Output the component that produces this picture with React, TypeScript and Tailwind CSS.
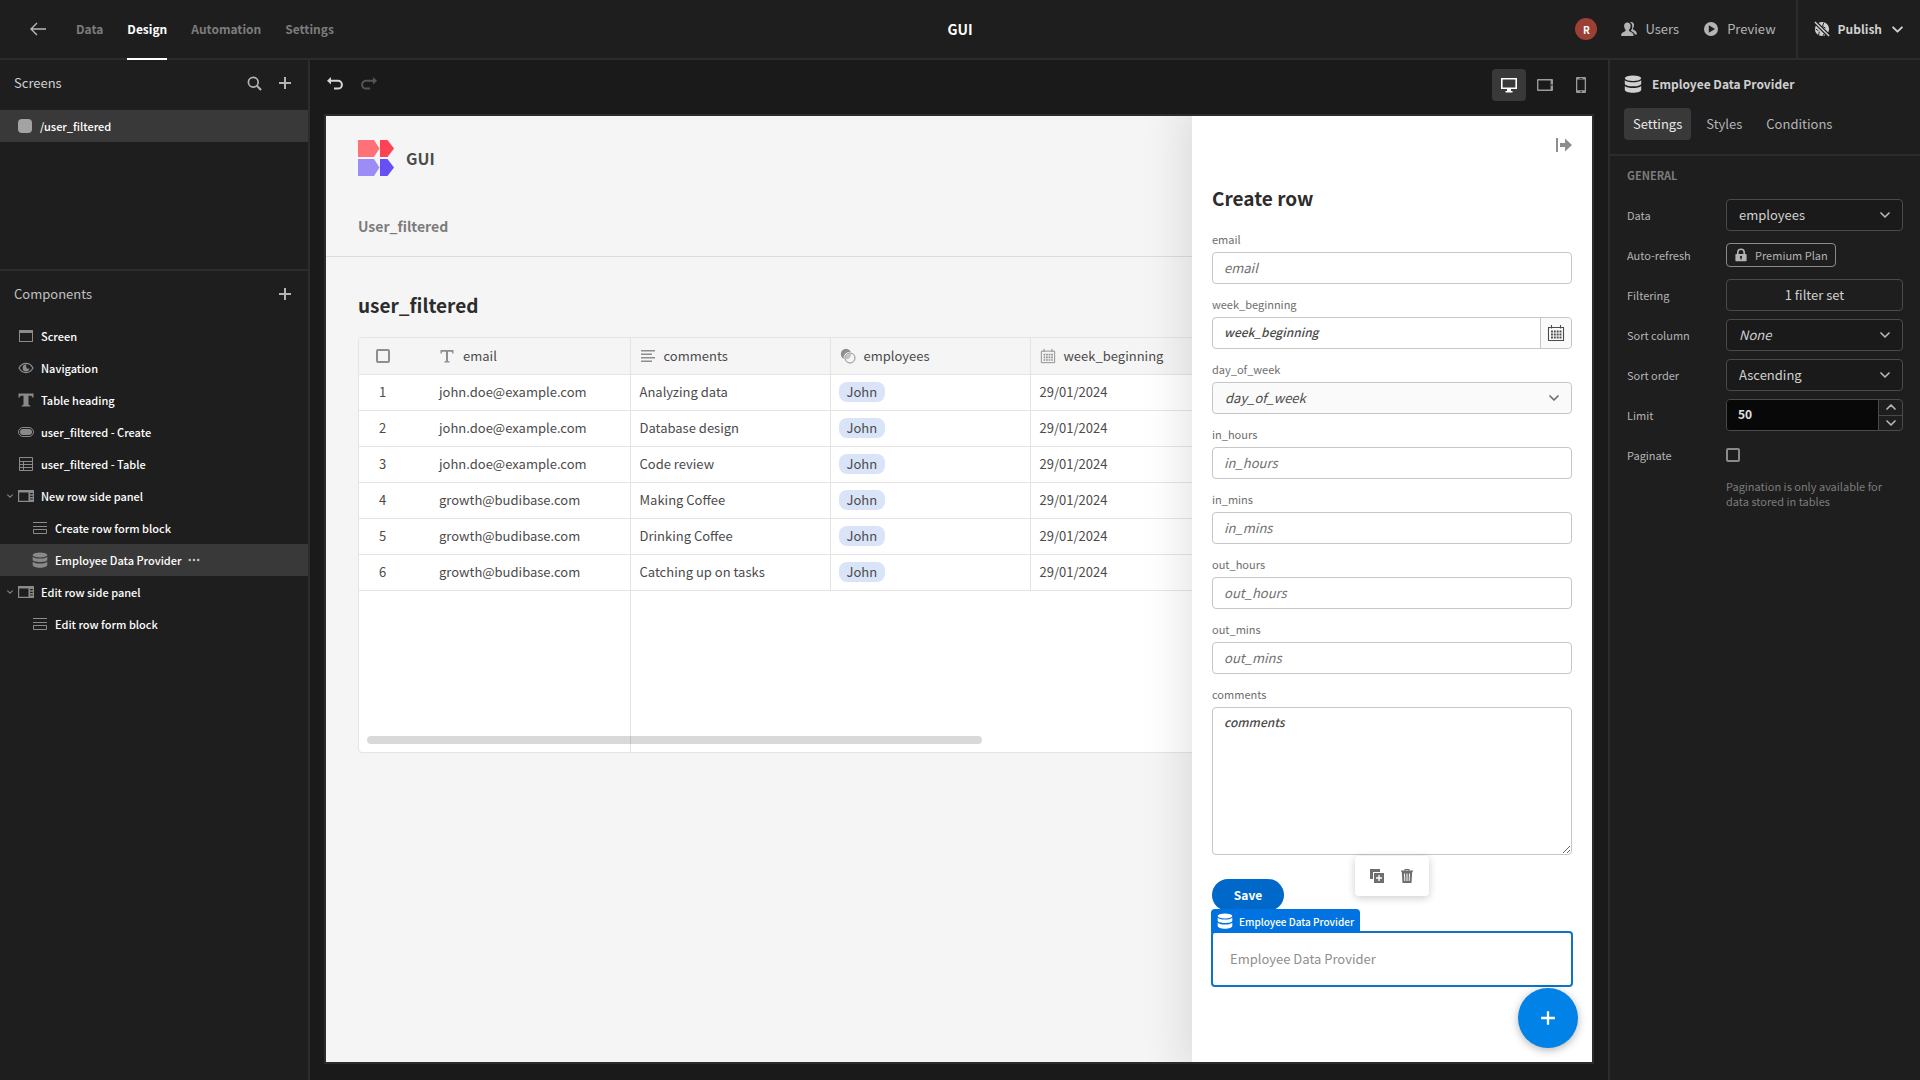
import { useState } from 'react'
import type { ReactNode } from 'react'

type IconProps = { className?: string }

function Svg({ className, children, box = 18 }: IconProps & { children: ReactNode; box?: number }) {
  return (
    <svg viewBox={`0 0 ${box} ${box}`} className={className} fill="currentColor" aria-hidden="true">
      {children}
    </svg>
  )
}

const BackIcon = ({ className }: IconProps) => (
  <Svg className={className} box={16}>
    <path d="M7 2 L1 8 L7 14 M1 8 H16" fill="none" stroke="currentColor" strokeWidth="1.4" />
  </Svg>
)

const SearchIcon = ({ className }: IconProps) => (
  <Svg className={className} box={16}>
    <circle cx="6.7" cy="6.7" r="5.2" fill="none" stroke="currentColor" strokeWidth="1.8" />
    <path d="M10.5 10.5 L15 15" stroke="currentColor" strokeWidth="2.2" />
  </Svg>
)

const PlusIcon = ({ className }: IconProps) => (
  <Svg className={className} box={14}>
    <path d="M6 1h2v5h5v2H8v5H6V8H1V6h5z" />
  </Svg>
)

const UndoIcon = ({ className }: IconProps) => (
  <Svg className={className} box={16}>
    <path d="M4 1 L0 4.7 L4 8.4 V5.8 H11 A2.9 2.9 0 0 1 11 11.6 H7 V13.6 H11 A4.9 4.9 0 0 0 11 3.8 H4 Z" />
  </Svg>
)

const ChevronIcon = ({ className }: IconProps) => (
  <Svg className={className} box={10}>
    <path d="M1 3 L5 7 L9 3" fill="none" stroke="currentColor" strokeWidth="1.7" strokeLinecap="round" strokeLinejoin="round" />
  </Svg>
)

const UsersIcon = ({ className }: IconProps) => (
  <Svg className={className} box={16}>
    <path d="M6.3 1.6c-2 0-3.2 1.5-3.2 3.5 0 1.5.7 2.9 1.4 3.7.3.4.2 1.1-.3 1.4C2.8 11 .2 11.7.2 13.9V15h12.3v-1.1c0-2.2-2.7-2.9-4.1-3.7-.5-.3-.6-1-.3-1.4.8-.8 1.5-2.2 1.5-3.7 0-2-1.3-3.5-3.3-3.5z" />
    <path d="M10 1c2 0 3 1.3 3 3.2 0 1.3-.5 2.3-1 3-.4.5-.2 1 .3 1.4 1.4.8 3.5 1.7 3.5 3.9V13.5h-2c-.3-2-2.6-3-4-3.8.9-1 1.5-2.7 1.5-4.6C11.3 3.4 10.4 1.9 9 1.2z" />
  </Svg>
)

const PlayIcon = ({ className }: IconProps) => (
  <Svg className={className} box={16}>
    <path fillRule="evenodd" d="M8 1a7 7 0 1 0 0 14A7 7 0 0 0 8 1zM5.8 4.3 L12 8 L5.8 11.7z" />
  </Svg>
)

const GlobeStrikeIcon = ({ className }: IconProps) => (
  <Svg className={className}>
    <circle cx="9" cy="9" r="8" />
    <path d="M4 2.5 L7 7 M11 2 L9.5 6 L13 8 M6 12 L5 17 M12.5 13 L10 16.5 M2 9 L5 11" stroke="#1e1e1e" strokeWidth="1.1" fill="none" />
    <path d="M0 0 L18 18" stroke="#1e1e1e" strokeWidth="4.4" />
    <path d="M1 1 L17 17" stroke="currentColor" strokeWidth="1.6" />
  </Svg>
)

const DatabaseIcon = ({ className }: IconProps) => (
  <Svg className={className} box={16}>
    <ellipse cx="8" cy="2.9" rx="7.3" ry="2.5" />
    <path d="M.7 4.7C2 6 5 6.5 8 6.5s6-.5 7.3-1.8v3.1c0 1.3-3.3 2.3-7.3 2.3S.7 9.1.7 7.8z" />
    <path d="M.7 9.7C2 11 5 11.5 8 11.5s6-.5 7.3-1.8V13c0 1.5-3.3 2.7-7.3 2.7S.7 14.5.7 13z" />
  </Svg>
)

const DesktopIcon = ({ className }: IconProps) => (
  <Svg className={className} box={16}>
    <path fillRule="evenodd" d="M0 1h16v11h-6v2h1.5v1.5h-7V14H6v-2H0zM1.6 2.6v7.8h12.8V2.6z" />
  </Svg>
)

const TabletIcon = ({ className }: IconProps) => (
  <Svg className={className} box={16}>
    <path fillRule="evenodd" d="M1 2h14a1 1 0 0 1 1 1v10a1 1 0 0 1-1 1H1a1 1 0 0 1-1-1V3a1 1 0 0 1 1-1zM1.4 3.4v9.2h12.2V3.4zM14.4 7v2h1V7z" />
  </Svg>
)

const PhoneIcon = ({ className }: IconProps) => (
  <Svg className={className} box={16}>
    <path fillRule="evenodd" d="M4 0h8a1 1 0 0 1 1 1v14a1 1 0 0 1-1 1H4a1 1 0 0 1-1-1V1a1 1 0 0 1 1-1zM4.3 2.5v10.7h7.4V2.5zM6.5 1v.7h3V1zM8 13.9a.8.8 0 1 0 0 1.6.8.8 0 0 0 0-1.6z" />
  </Svg>
)

const CollapseIcon = ({ className }: IconProps) => (
  <Svg className={className} box={16}>
    <path d="M0 1h2v14H0zM4 6h5V1.5L16 8l-7 6.5V10H4z" />
  </Svg>
)

const LockIcon = ({ className }: IconProps) => (
  <Svg className={className} box={14}>
    <path fillRule="evenodd" d="M2 6h1V4.5a4 4 0 0 1 8 0V6h1a.6.6 0 0 1 .6.6v6a.6.6 0 0 1-.6.6H2a.6.6 0 0 1-.6-.6v-6A.6.6 0 0 1 2 6zm2.6 0h4.8V4.5a2.4 2.4 0 0 0-4.8 0zM7 7.8a1.2 1.2 0 0 0-.6 2.2v1.5h1.2V10A1.2 1.2 0 0 0 7 7.8z" />
  </Svg>
)

const ScreenIcon = ({ className }: IconProps) => (
  <Svg className={className} box={16}>
    <path fillRule="evenodd" d="M1 2h14v12H1zM2 5v8h12V5z" />
  </Svg>
)

const EyeIcon = ({ className }: IconProps) => (
  <Svg className={className} box={16}>
    <path d="M1 8c1.6-3 4-4.6 7-4.6S13.4 5 15 8c-1.6 3-4 4.6-7 4.6S2.6 11 1 8z" fill="none" stroke="currentColor" strokeWidth="1.2" />
    <path d="M8 4.6a3.4 3.4 0 1 0 3.4 3.4 1.5 1.5 0 0 1-2.8-.6A1.5 1.5 0 0 1 9 4.8 3.4 3.4 0 0 0 8 4.6z" />
  </Svg>
)

const HeadingIcon = ({ className }: IconProps) => (
  <Svg className={className} box={16}>
    <path d="M.5 1.5h15v4h-1.2c-.2-1.3-.8-1.8-2-1.8H10.5v8.6c0 .8.5 1 1.8 1.1v1H3.700v-1c1.300-.1 1.800-.3 1.800-1.100V3.700H3.700c-1.200 0-1.800.5-2 1.800H.5z" />
  </Svg>
)

const ButtonIcon = ({ className }: IconProps) => (
  <Svg className={className} box={16}>
    <rect x=".5" y="3.5" width="15" height="9" rx="4.5" fill="none" stroke="currentColor" />
    <rect x="2" y="5" width="12" height="6" rx="3" />
  </Svg>
)

const TableIcon = ({ className }: IconProps) => (
  <Svg className={className} box={16}>
    <path d="M1.5 1.5h13v13h-13zM1.5 5.5h13M1.5 8.5h13M1.5 11.5h13M5.5 5.5v9" fill="none" stroke="currentColor" />
  </Svg>
)

const SidePanelIcon = ({ className }: IconProps) => (
  <Svg className={className} box={16}>
    <path fillRule="evenodd" d="M0 2h16v12H0zM1.2 4.6v8.2H10.5V4.6zM12 5v1.2h2.8V5zM12 7.7v1.2h2.8V7.7zM12 10.4v1.2h2.8v-1.2z" />
  </Svg>
)

const FormIcon = ({ className }: IconProps) => (
  <Svg className={className} box={16}>
    <path d="M1 2.5h14M1 6.5h14M1.5 9.5h13v4h-13z" fill="none" stroke="currentColor" />
  </Svg>
)

const MoreIcon = ({ className }: IconProps) => (
  <Svg className={className} box={12}>
    <circle cx="1.8" cy="6" r="1.3" />
    <circle cx="6" cy="6" r="1.3" />
    <circle cx="10.2" cy="6" r="1.3" />
  </Svg>
)

const TextIcon = ({ className }: IconProps) => (
  <Svg className={className} box={16}>
    <path d="M1.5 2h13v3.5h-1.2c-.1-1.2-.4-1.7-1.5-1.7H9v8.8c0 .6.4.8 1.7.9v1H5.3v-1c1.3-.1 1.7-.3 1.7-.9V3.8H4.2c-1.1 0-1.4.5-1.5 1.7H1.5z" />
  </Svg>
)

const LongTextIcon = ({ className }: IconProps) => (
  <Svg className={className} box={16}>
    <path d="M1 2h14v1.5H1zM1 5.5h11V7H1zM1 9h14v1.5H1zM1 12.5h11V14H1z" />
  </Svg>
)

const RelationshipIcon = ({ className }: IconProps) => (
  <Svg className={className} box={16}>
    <circle cx="6" cy="6" r="5.2" />
    <circle cx="10" cy="10" r="5.2" fill="#f5f5f5" fillOpacity=".5" stroke="#f5f5f5" strokeWidth="2.2" />
    <circle cx="10" cy="10" r="5" fill="none" stroke="currentColor" strokeWidth="1" />
  </Svg>
)

const CalendarIcon = ({ className }: IconProps) => (
  <Svg className={className} box={18}>
    <path d="M1.5 3.5h15v13h-15zM4.5 1v3.5M13.5 1v3.5" fill="none" stroke="currentColor" strokeWidth="1.1" />
    <path d="M4 7.5h10.5M4 10.5h10.5M4 13.5h10.5" fill="none" stroke="currentColor" strokeWidth="1.9" strokeDasharray="1.9 .95" />
  </Svg>
)

const DuplicateIcon = ({ className }: IconProps) => (
  <Svg className={className} box={14}>
    <path d="M0 0h10v3H3v7H0z" />
    <path fillRule="evenodd" d="M4 4h10v10H4zM8.3 6v2.3H6v1.4h2.3V12h1.4V9.7H12V8.3H9.7V6z" />
  </Svg>
)

const TrashIcon = ({ className }: IconProps) => (
  <Svg className={className} box={14}>
    <path fillRule="evenodd" d="M4.5 0h5v1.5H13v1.3h-.8L11.5 14h-9L1.8 2.8H1V1.5h3.5zM5.5 1v.5h3V1zM4 4.5l.4 7.5h.9l-.3-7.5zM6.5 4.5V12h1V4.5zM9 4.5L8.7 12h.9l.4-7.5z" />
  </Svg>
)

function Logo() {
  return (
    <svg viewBox="0 0 36 36" className="size-9" aria-hidden="true">
      <path d="M0 0h16l5.5 8.5L16 17H0z" fill="#ff7176" />
      <path d="M22 0h7.5L36 8.5 29.5 17H22z" fill="#ff4254" />
      <path d="M0 19h16l5.5 8.5L16 36H0z" fill="#9b8cf8" />
      <path d="M22 19h7.5L36 27.5 29.5 36H22z" fill="#6650f5" />
    </svg>
  )
}

const navTabs = ['Data', 'Design', 'Automation', 'Settings']

const components = [
  { name: 'Screen', Icon: ScreenIcon },
  { name: 'Navigation', Icon: EyeIcon },
  { name: 'Table heading', Icon: HeadingIcon },
  { name: 'user_filtered - Create', Icon: ButtonIcon },
  { name: 'user_filtered - Table', Icon: TableIcon },
  { name: 'New row side panel', Icon: SidePanelIcon, open: true },
  { name: 'Create row form block', Icon: FormIcon, nested: true },
  { name: 'Employee Data Provider', Icon: DatabaseIcon, nested: true },
  { name: 'Edit row side panel', Icon: SidePanelIcon, open: true },
  { name: 'Edit row form block', Icon: FormIcon, nested: true },
]

const rows = [
  { email: 'john.doe@example.com', comments: 'Analyzing data' },
  { email: 'john.doe@example.com', comments: 'Database design' },
  { email: 'john.doe@example.com', comments: 'Code review' },
  { email: 'growth@budibase.com', comments: 'Making Coffee' },
  { email: 'growth@budibase.com', comments: 'Drinking Coffee' },
  { email: 'growth@budibase.com', comments: 'Catching up on tasks' },
]

const columns = [
  { name: 'comments', Icon: LongTextIcon },
  { name: 'employees', Icon: RelationshipIcon },
  { name: 'week_beginning', Icon: CalendarIcon },
]

function TopBar() {
  return (
    <header className="flex h-15 shrink-0 border-b-2 border-[#2c2c2c]">
      <div className="flex flex-1 items-center">
        <a href="#back" aria-label="Back" className="ml-[30px] text-[#b8b8b8]">
          <BackIcon className="size-4" />
        </a>
        <nav className="ml-[30px] flex h-15 gap-6 self-start text-[12px] font-bold">
          {navTabs.map((tab) => (
            <a
              key={tab}
              href={`#${tab.toLowerCase()}`}
              className={
                tab === 'Design'
                  ? 'flex items-center border-b-2 border-white text-white'
                  : 'flex items-center border-b-2 border-transparent text-[#7c7c7c]'
              }
            >
              {tab}
            </a>
          ))}
        </nav>
      </div>
      <h1 className="flex items-center text-[14px] font-bold text-white">GUI</h1>
      <div className="flex flex-1 items-center justify-end text-[13px] text-[#b4b4b4]">
        <span className="mr-6 flex size-[22px] items-center justify-center rounded-full bg-[#9c4035] text-[10px] font-bold text-white">
          R
        </span>
        <button className="mr-6 flex items-center gap-2">
          <UsersIcon className="size-4" />
          Users
        </button>
        <button className="mr-5 flex items-center gap-2">
          <PlayIcon className="size-4" />
          Preview
        </button>
        <button className="flex h-full items-center gap-2 border-l-2 border-[#2c2c2c] pr-[17px] pl-4 text-[12px] font-bold text-[#d0d0d0]">
          <GlobeStrikeIcon className="size-4" />
          Publish
          <ChevronIcon className="ml-0.5 size-[11px]" />
        </button>
      </div>
    </header>
  )
}

function LeftPanel() {
  return (
    <aside className="flex w-[310px] shrink-0 flex-col border-r-2 border-[#2c2c2c]">
      <section className="h-[211px] border-b-2 border-[#2c2c2c]">
        <div className="flex h-[50px] items-center pr-4 pb-1 pl-3.5 text-[#b4b4b4]">
          <h2 className="flex-1 text-[13px] text-[#d0d0d0]">Screens</h2>
          <button aria-label="Search screens">
            <SearchIcon className="size-[15px]" />
          </button>
          <button aria-label="Add screen" className="ml-4">
            <PlusIcon className="size-[14px]" />
          </button>
        </div>
        <a href="#user_filtered" className="flex h-8 items-center gap-2 bg-[#393939] pl-[18px] text-[11px] font-medium text-white">
          <span className="size-3.5 rounded-[4px] bg-[#a3a3a3]" />
          /user_filtered
        </a>
      </section>
      <section>
        <div className="flex h-[49px] items-center pr-4 pb-1 pl-3.5 text-[#b4b4b4]">
          <h2 className="flex-1 text-[13px] text-[#c0c0c0]">Components</h2>
          <button aria-label="Add component">
            <PlusIcon className="size-[14px]" />
          </button>
        </div>
        <ul>
          {components.map(({ name, Icon, open, nested }) => {
            const selected = name === 'Employee Data Provider'
            return (
              <li
                key={name}
                className={`flex h-8 items-center text-[11px] font-medium text-white ${selected ? 'bg-[#393939]' : ''} ${nested ? 'pl-8' : 'pl-[7px]'}`}
              >
                {!nested && <span className="w-[11px]">{open && <ChevronIcon className="size-[6px] text-[#8a8a8a]" />}</span>}
                <Icon className="size-4 text-[#8a8a8a]" />
                <span className="ml-[7px]">{name}</span>
                {selected && (
                  <button aria-label="More actions" className="ml-[7px]">
                    <MoreIcon className="size-3 text-[#c0c0c0]" />
                  </button>
                )}
              </li>
            )
          })}
        </ul>
      </section>
    </aside>
  )
}

function CanvasToolbar() {
  return (
    <div className="mb-1 flex h-[50px] items-center justify-between pr-2.5 pl-[17px] text-[#9a9a9a]">
      <div className="flex gap-[18px] pb-0.5">
        <button aria-label="Undo">
          <UndoIcon className="size-4 text-[#d6d6d6]" />
        </button>
        <button aria-label="Redo" disabled>
          <UndoIcon className="size-4 -scale-x-100 text-[#555555]" />
        </button>
      </div>
      <div className="flex gap-0.5">
        <button aria-label="Desktop" className="flex h-8 w-[34px] items-center justify-center rounded bg-[#393939] text-white">
          <DesktopIcon className="size-4" />
        </button>
        <button aria-label="Tablet" className="flex h-8 w-[34px] items-center justify-center">
          <TabletIcon className="size-4" />
        </button>
        <button aria-label="Mobile" className="flex h-8 w-[34px] items-center justify-center">
          <PhoneIcon className="size-4" />
        </button>
      </div>
    </div>
  )
}

function DataTable() {
  return (
    <div className="mt-4 flex h-[416px] flex-col overflow-hidden rounded border border-[#e4e4e4] bg-white">
      <table className="w-full table-fixed border-collapse text-left text-[13px] text-[#4b4b4b]">
        <colgroup>
          <col className="w-[71px]" />
          <col className="w-[200px]" />
          <col className="w-[200px]" />
          <col className="w-[200px]" />
          <col className="w-[200px]" />
          <col />
        </colgroup>
        <thead className="bg-[#f5f5f5]">
          <tr className="h-9 border-b border-[#e4e4e4]">
            <th className="pl-[17px]">
              <input
                type="checkbox"
                aria-label="Select all rows"
                className="block size-3.5 appearance-none rounded-[2px] border-2 border-[#8e8e8e]"
              />
            </th>
            <th className="border-r border-[#e4e4e4] font-normal">
              <span className="flex items-center gap-2 pl-[9px]">
                <TextIcon className="size-4 text-[#8e8e8e]" />
                email
              </span>
            </th>
            {columns.map(({ name, Icon }) => (
              <th key={name} className="border-r border-[#e4e4e4] font-normal">
                <span className="flex items-center gap-2 pl-[9px]">
                  <Icon className="size-4 text-[#8e8e8e]" />
                  {name}
                </span>
              </th>
            ))}
            <th />
          </tr>
        </thead>
        <tbody>
          {rows.map((row, i) => (
            <tr key={i} className="h-9 border-b border-[#e4e4e4]">
              <td className="pr-6 text-center">{i + 1}</td>
              <td className="border-r border-[#e4e4e4] pl-[9px]">{row.email}</td>
              <td className="border-r border-[#e4e4e4] pl-[9px]">{row.comments}</td>
              <td className="border-r border-[#e4e4e4] pl-2">
                <span className="inline-block h-5 rounded-lg bg-[#d9e4f8] px-2 leading-5">John</span>
              </td>
              <td className="border-r border-[#e4e4e4] pl-[9px]">29/01/2024</td>
              <td />
            </tr>
          ))}
        </tbody>
      </table>
      <div className="relative flex-1">
        <div className="h-full w-[272px] border-r border-[#e4e4e4]" />
        <div className="absolute bottom-2 left-2 h-2 w-[615px] rounded-full bg-black/15" />
      </div>
    </div>
  )
}

const inputClass =
  'block h-8 w-full rounded border border-[#c6c6c6] bg-white px-[11px] pb-0.5 text-[13px] italic placeholder:text-[#707070]'

function Field({ name, children }: { name: string; children?: ReactNode }) {
  return (
    <div className="mb-3">
      <label htmlFor={name} className="block h-[21px] text-[11px] leading-4 text-[#6e6e6e]">
        {name}
      </label>
      {children ?? <input id={name} placeholder={name} className={inputClass} />}
    </div>
  )
}

function SidePanel() {
  return (
    <div className="absolute inset-y-0 right-0 flex w-[400px] flex-col bg-white px-5 pt-[21px] text-[#4b4b4b] shadow-[0_0_40px_10px_rgba(0,0,0,0.1)]">
      <button aria-label="Close panel" className="self-end text-[#8e8e8e]">
        <CollapseIcon className="size-4" />
      </button>
      <h2 className="mt-[29px] mb-[17px] text-[19px] leading-8 font-bold text-[#2c2c2c]">Create row</h2>
      <form>
        <Field name="email" />
        <Field name="week_beginning">
          <div className="flex h-8 rounded border border-[#c6c6c6]">
            <input
              id="week_beginning"
              placeholder="week_beginning"
              className="min-w-0 flex-1 rounded-l px-[11px] pb-0.5 text-[12px] font-medium italic placeholder:text-[#4b4b4b]"
            />
            <button
              type="button"
              aria-label="Pick a date"
              className="flex w-[31px] items-center justify-center rounded-r border-l border-[#c6c6c6] bg-[#fafafa]"
            >
              <CalendarIcon className="size-[18px]" />
            </button>
          </div>
        </Field>
        <Field name="day_of_week">
          <div className="relative">
            <select
              id="day_of_week"
              className="block h-8 w-full appearance-none rounded border border-[#c6c6c6] bg-[#fafafa] px-3 text-[13px] italic"
            >
              <option>day_of_week</option>
            </select>
            <ChevronIcon className="pointer-events-none absolute top-[11px] right-[13px] size-2.5 text-[#6e6e6e]" />
          </div>
        </Field>
        <Field name="in_hours" />
        <Field name="in_mins" />
        <Field name="out_hours" />
        <Field name="out_mins" />
        <Field name="comments">
          <textarea
            id="comments"
            placeholder="comments"
            className="block h-37 w-full resize rounded border border-[#c6c6c6] px-[11px] py-1 text-[12px] leading-5 font-medium italic placeholder:text-[#4b4b4b]"
          />
        </Field>
        <button type="button" className="mt-6 block h-8 w-[72px] rounded-full bg-[#0068c9] text-[12px] font-bold text-white">
          Save
        </button>
      </form>
      <div className="relative -mx-px mt-5 flex h-14 items-center rounded border-2 border-[#0d75c8] pl-[17px] text-[13px] text-[#8e8e8e]">
        Employee Data Provider
        <div className="absolute bottom-full -left-0.5 flex h-6 items-center gap-1.5 rounded-t bg-[#0073e0] px-1.5 text-[10px] font-medium text-white">
          <DatabaseIcon className="size-4" />
          Employee Data Provider
        </div>
        <div className="absolute bottom-[89px] left-[142px] flex h-10 w-[74px] items-center justify-center gap-4 rounded bg-white text-[#6e6e6e] shadow-[0_2px_8px_rgba(0,0,0,0.2)]">
          <button aria-label="Duplicate component">
            <DuplicateIcon className="size-3.5" />
          </button>
          <button aria-label="Delete component">
            <TrashIcon className="size-3.5" />
          </button>
        </div>
      </div>
      <button
        aria-label="Add"
        className="absolute right-3.5 bottom-3.5 flex size-15 items-center justify-center rounded-full bg-[#0082e6] text-white shadow-[0_2px_8px_rgba(0,0,0,0.3)]"
      >
        <PlusIcon className="size-4" />
      </button>
    </div>
  )
}

function Canvas() {
  return (
    <main className="flex min-w-0 flex-1 flex-col bg-[#1a1a1a] pb-4">
      <CanvasToolbar />
      <div className="relative mx-3.5 flex-1 overflow-hidden border-2 border-[#2c2c2c] bg-[#f5f5f5]">
        <header className="h-[141px] border-b border-[#dcdcdc] px-8 pt-6">
          <div className="flex items-center gap-3 text-[16px] leading-9 font-bold text-[#4b4b4b]">
            <Logo />
            GUI
          </div>
          <a href="#user_filtered" className="mt-[38px] block text-[14px] leading-6 font-bold text-[#7c7c7c]">
            User_filtered
          </a>
        </header>
        <div className="px-8 pt-8">
          <h2 className="text-[19px] leading-8 font-bold text-[#2c2c2c]">user_filtered</h2>
          <DataTable />
        </div>
        <SidePanel />
      </div>
    </main>
  )
}

function Setting({ label, id, children }: { label: string; id: string; children: ReactNode }) {
  return (
    <div className="flex min-h-10 items-center">
      <label htmlFor={id} className="w-[99px] shrink-0 text-[11px] text-[#b4b4b4]">
        {label}
      </label>
      {children}
    </div>
  )
}

function Picker({ id, value, italic }: { id: string; value: string; italic?: boolean }) {
  return (
    <div className="relative flex-1">
      <select
        id={id}
        className={`block h-8 w-full appearance-none rounded border border-[#4a4a4a] bg-[#1a1a1a] px-3 text-[13px] text-[#d0d0d0] ${italic ? 'italic' : ''}`}
      >
        <option>{value}</option>
      </select>
      <ChevronIcon className="pointer-events-none absolute top-[11px] right-[13px] size-2.5 text-[#b4b4b4]" />
    </div>
  )
}

function RightPanel() {
  const [limit, setLimit] = useState(50)

  return (
    <aside className="w-[312px] shrink-0 border-l-2 border-[#2c2c2c]">
      <div className="h-24 border-b-2 border-[#2c2c2c] px-3.5 pt-2">
        <h2 className="flex h-8 items-center gap-2.5 text-[12px] font-bold text-[#d0d0d0]">
          <DatabaseIcon className="size-[18px]" />
          Employee Data Provider
        </h2>
        <div className="mt-2 flex text-[13px] text-[#b4b4b4]">
          <button className="h-8 rounded bg-[#393939] px-[9px] text-[#e8e8e8]">Settings</button>
          <button className="ml-1.5 h-8 px-[9px]">Styles</button>
          <button className="ml-1.5 h-8 px-[9px]">Conditions</button>
        </div>
      </div>
      <div className="px-[17px] pt-[9px]">
        <h3 className="h-[30px] text-[11px] leading-5 font-bold text-[#7c7c7c]">GENERAL</h3>
        <Setting label="Data" id="data">
          <Picker id="data" value="employees" />
        </Setting>
        <Setting label="Auto-refresh" id="auto-refresh">
          <button id="auto-refresh" className="flex h-6 items-center gap-[7px] rounded border border-[#8a8a8a] px-[7px] text-[11px] text-[#b4b4b4]">
            <LockIcon className="size-3.5" />
            Premium Plan
          </button>
        </Setting>
        <Setting label="Filtering" id="filtering">
          <button id="filtering" className="h-8 flex-1 rounded border border-[#4a4a4a] text-[13px] text-[#d0d0d0]">
            1 filter set
          </button>
        </Setting>
        <Setting label="Sort column" id="sort-column">
          <Picker id="sort-column" value="None" italic />
        </Setting>
        <Setting label="Sort order" id="sort-order">
          <Picker id="sort-order" value="Ascending" />
        </Setting>
        <Setting label="Limit" id="limit">
          <div className="flex h-8 flex-1 overflow-hidden rounded border border-[#4a4a4a]">
            <input
              id="limit"
              value={limit}
              onChange={(e) => setLimit(Number(e.target.value) || 0)}
              className="min-w-0 flex-1 bg-[#080808] px-[11px] pb-0.5 text-[12px] font-bold text-[#e0e0e0]"
            />
            <div className="flex w-6 flex-col border-l border-[#4a4a4a] text-[#b4b4b4]">
              <button
                aria-label="Increase limit"
                className="flex flex-1 items-center justify-center border-b border-[#4a4a4a]"
                onClick={() => setLimit(limit + 1)}
              >
                <ChevronIcon className="size-2.5 rotate-180" />
              </button>
              <button aria-label="Decrease limit" className="flex flex-1 items-center justify-center" onClick={() => setLimit(limit - 1)}>
                <ChevronIcon className="size-2.5" />
              </button>
            </div>
          </div>
        </Setting>
        <Setting label="Paginate" id="paginate">
          <input id="paginate" type="checkbox" className="size-3.5 appearance-none rounded-[2px] border-2 border-[#8a8a8a]" />
        </Setting>
        <p className="mt-1 ml-[99px] text-[11px] leading-[15px] text-[#7c7c7c]">
          Pagination is only available for data stored in tables
        </p>
      </div>
    </aside>
  )
}

export default function App() {
  return (
    <div className="flex min-h-screen flex-col bg-[#1e1e1e] font-['Noto_Sans_CJK_SC',sans-serif]">
      <TopBar />
      <div className="flex flex-1">
        <LeftPanel />
        <Canvas />
        <RightPanel />
      </div>
    </div>
  )
}
